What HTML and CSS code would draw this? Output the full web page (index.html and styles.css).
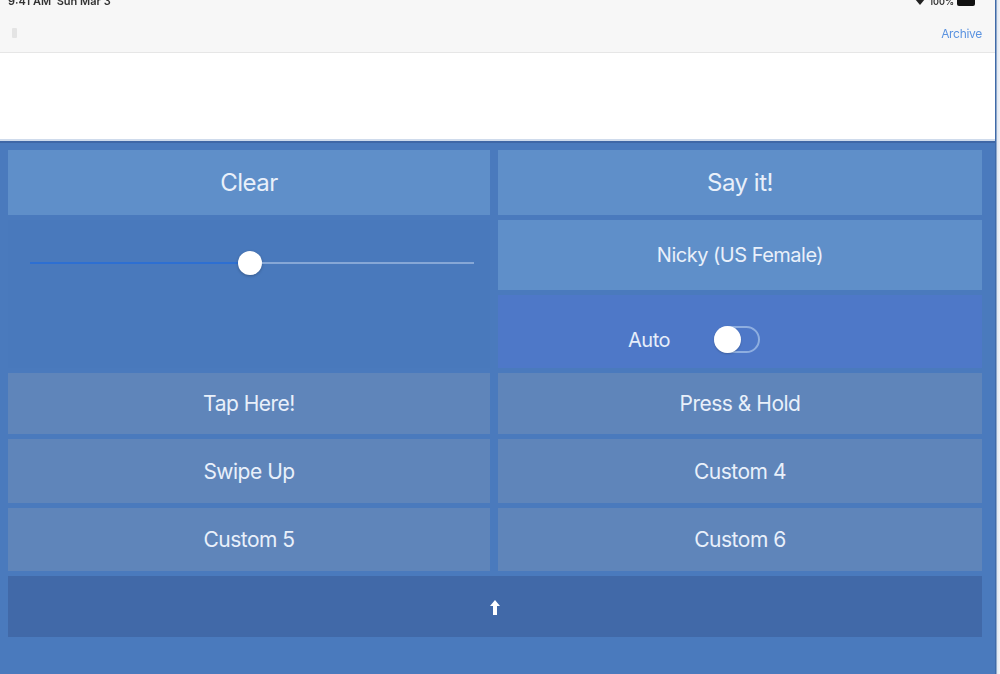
FILE: index.html
```html
<!DOCTYPE html>
<html>
<head>
<meta charset="utf-8">
<link rel="stylesheet" href="styles.css">
</head>
<body>
<div class="screen">
  <div class="app">
    <div class="status">
      <span class="time">9:41 AM&nbsp;&nbsp;Sun Mar 3</span>
      <span class="right-status">
        <svg width="12" height="10" viewBox="0 0 12 10"><path d="M6 9 L1 3 Q6 -1 11 3 Z" fill="#222"/></svg>
        <span class="pct">100%</span>
        <span class="battery"></span>
      </span>
    </div>
    <div class="navbar">
      <span class="nav-mark"></span>
      <span class="archive">Archive</span>
    </div>
    <div class="textarea"></div>
    <div class="panel">
      <div class="grid">
        <div class="btn big">Clear</div>
        <div class="btn big">Say it!</div>
        <div class="slider-cell">
          <div class="slider">
            <div class="fill"></div>
            <div class="thumb"></div>
            <div class="rest"></div>
          </div>
        </div>
        <div class="btn voice">Nicky (US Female)</div>
        <div class="auto-cell">
          <span class="auto-label">Auto</span>
          <span class="toggle"><span class="knob"></span></span>
        </div>
        <div class="btn soft">Tap Here!</div>
        <div class="btn soft">Press &amp; Hold</div>
        <div class="btn soft">Swipe Up</div>
        <div class="btn soft">Custom 4</div>
        <div class="btn soft">Custom 5</div>
        <div class="btn soft">Custom 6</div>
        <div class="arrow-bar">
          <svg width="12" height="18" viewBox="0 0 12 18"><path d="M6 1 L11 7 L8 7 L8 16 L4 16 L4 7 L1 7 Z" fill="#ffffff"/></svg>
        </div>
      </div>
    </div>
  </div>
  <div class="edge"></div>
</div>
</body>
</html>
```

FILE: styles.css
```css
html, body {
  margin: 0;
  padding: 0;
}
body {
  width: 1000px;
  height: 674px;
  overflow: hidden;
  font-family: "Inter", "Liberation Sans", Arial, sans-serif;
  background: #e3e9f1;
}
.screen {
  display: flex;
  width: 1000px;
  height: 674px;
}
.app {
  width: 995px;
  display: flex;
  flex-direction: column;
  background: #4a7abd;
}
.edge {
  width: 5px;
  background: linear-gradient(to right, #3f6aa8 0, #3f6aa8 1px, #dfe6ef 2px, #f2f5f9 100%);
}
.status {
  height: 14px;
  background: #f7f7f7;
  display: flex;
  justify-content: space-between;
  align-items: flex-start;
  padding: 0 20px 0 8px;
  overflow: hidden;
  font-size: 11px;
  font-weight: 600;
  color: #333;
  filter: blur(0.6px);
}
.time {
  margin-top: -5px;
  line-height: 12px;
}
.right-status {
  display: flex;
  align-items: center;
  gap: 3px;
  margin-top: -5px;
  height: 12px;
}
.pct { font-size: 9px; }
.battery {
  width: 18px;
  height: 9px;
  background: #111;
  border-radius: 2px;
}
.navbar {
  height: 38px;
  background: #f7f7f7;
  border-bottom: 1px solid #e6e6e6;
  display: flex;
  align-items: center;
  justify-content: space-between;
  padding: 0 13px 0 12px;
}
.nav-mark {
  width: 5px;
  height: 10px;
  background: #e4e4e4;
  border-radius: 1px;
}
.archive {
  font-size: 12px;
  color: #5b93e0;
  letter-spacing: -0.3px;
  filter: blur(0.4px);
}
.textarea {
  height: 86px;
  background: #ffffff;
  border-bottom: 2px solid #cfdbec;
}
.panel {
  flex: 1;
  border-top: 2px solid #3f67a6;
  padding: 7px 13px 0 8px;
}
.grid {
  display: grid;
  grid-template-columns: 482px 484px;
  column-gap: 8px;
  grid-template-rows: 65px 70px 73px 61px 64px 63px 61px;
  row-gap: 5px;
}
.btn {
  display: flex;
  align-items: center;
  justify-content: center;
  color: #e9f0fa;
  background: #5f8fc9;
  font-size: 21px;
  letter-spacing: -0.5px;
}
.btn.big {
  font-size: 24px;
}
.btn.voice {
  font-size: 20px;
}
.btn.soft {
  background: #5f85ba;
}
.slider-cell {
  grid-row: span 2;
  background: #4979bc;
  display: flex;
  align-items: flex-start;
  padding: 30px 16px 0 22px;
}
.slider {
  flex: 1;
  display: flex;
  align-items: center;
  height: 26px;
}
.fill {
  width: 208px;
  height: 2px;
  background: #2d6fd2;
}
.thumb {
  width: 24px;
  height: 24px;
  border-radius: 50%;
  background: #ffffff;
  box-shadow: 0 1px 3px rgba(0,0,0,0.25);
}
.rest {
  flex: 1;
  height: 2px;
  background: #86a7d6;
}
.auto-cell {
  background: #4e78c8;
  display: flex;
  align-items: center;
  justify-content: center;
  gap: 44px;
  padding: 16px 92px 0 0;
}
.auto-label {
  color: #e6eefa;
  font-size: 20px;
  letter-spacing: -0.5px;
}
.toggle {
  width: 46px;
  height: 27px;
  border: 2px solid #8eaee0;
  border-radius: 14px;
  box-sizing: border-box;
  display: flex;
  align-items: center;
}
.knob {
  width: 27px;
  height: 27px;
  border-radius: 50%;
  background: #ffffff;
  margin-left: -2px;
  box-shadow: 0 1px 2px rgba(0,0,0,0.2);
}
.arrow-bar {
  grid-column: span 2;
  background: #4169a8;
  display: flex;
  align-items: center;
  justify-content: center;
  padding-top: 2px;
}
```
